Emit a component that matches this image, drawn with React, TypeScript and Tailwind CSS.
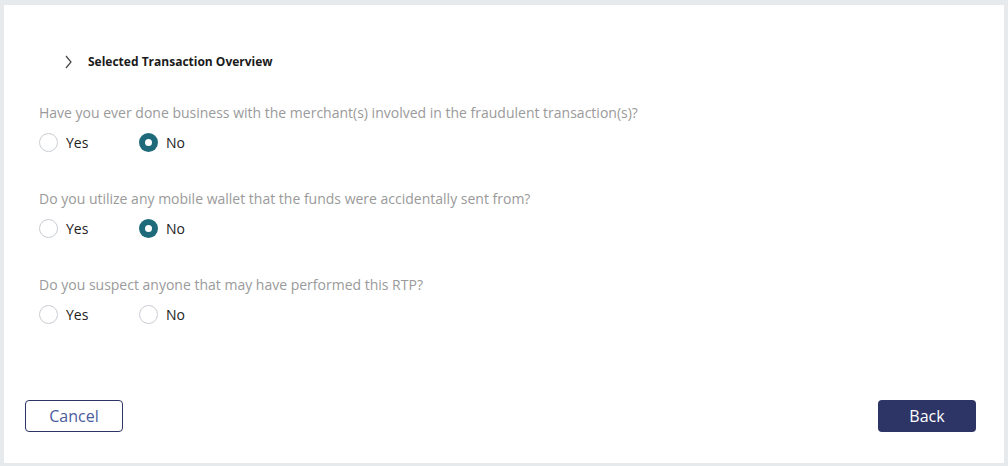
import React, { useState } from 'react';

const questions = [
  { id: 'merchant', text: 'Have you ever done business with the merchant(s) involved in the fraudulent transaction(s)?', answer: 'No' },
  { id: 'wallet', text: 'Do you utilize any mobile wallet that the funds were accidentally sent from?', answer: 'No' },
  { id: 'suspect', text: 'Do you suspect anyone that may have performed this RTP?', answer: '' },
];

function Radio({ checked, label, onClick }: { checked: boolean; label: string; onClick: () => void }) {
  return (
    <button type="button" onClick={onClick} className="flex items-center w-[100px] text-left">
      {checked ? (
        <span className="w-[19px] h-[19px] rounded-full bg-[#1f6a7a] flex items-center justify-center">
          <span className="w-[7px] h-[7px] rounded-full bg-white"></span>
        </span>
      ) : (
        <span className="w-[19px] h-[19px] rounded-full border border-[#c9cdd2] bg-white"></span>
      )}
      <span className="ml-[8px] text-[14px] text-[#222]">{label}</span>
    </button>
  );
}

export default function App() {
  const [answers, setAnswers] = useState<{ [key: string]: string }>(
    Object.fromEntries(questions.map(q => [q.id, q.answer]))
  );

  return (
    <div
      className="w-[1008px] h-[466px] bg-[#e6eaed] pt-[5px] pl-[4px]"
      style={{ fontFamily: '"Open Sans", "Noto Sans", sans-serif' }}
    >
      <div className="w-[1000px] h-[458px] bg-white flex flex-col">
        {/* Overview header */}
        <div className="flex items-center pt-[48px] pl-[58px]">
          <svg width="12" height="16" viewBox="0 0 12 16" className="text-[#444]">
            <path d="M4 2 L9 8 L4 14" fill="none" stroke="currentColor" strokeWidth="1.2" />
          </svg>
          <span className="ml-[14px] text-[12px] font-bold text-[#1a1a1a]">Selected Transaction Overview</span>
        </div>

        {/* Questions */}
        <div className="pl-[35px] mt-[32px] flex flex-col gap-[36px]">
          {questions.map(q => (
            <div key={q.id}>
              <p className="text-[14px] text-[#9a9a9a] leading-[20px]">{q.text}</p>
              <div className="flex mt-[9px]">
                <Radio checked={answers[q.id] === 'Yes'} label="Yes" onClick={() => setAnswers({ ...answers, [q.id]: 'Yes' })} />
                <Radio checked={answers[q.id] === 'No'} label="No" onClick={() => setAnswers({ ...answers, [q.id]: 'No' })} />
              </div>
            </div>
          ))}
        </div>

        {/* Footer buttons */}
        <div className="mt-auto mb-[31px] pl-[21px] pr-[28px] flex justify-between">
          <button className="w-[98px] h-[32px] rounded-[4px] border border-[#2d3566] text-[16px] text-[#4a5c9c]">
            Cancel
          </button>
          <button className="w-[98px] h-[32px] rounded-[4px] bg-[#2d3566] text-[16px] text-white">
            Back
          </button>
        </div>
      </div>
    </div>
  );
}
